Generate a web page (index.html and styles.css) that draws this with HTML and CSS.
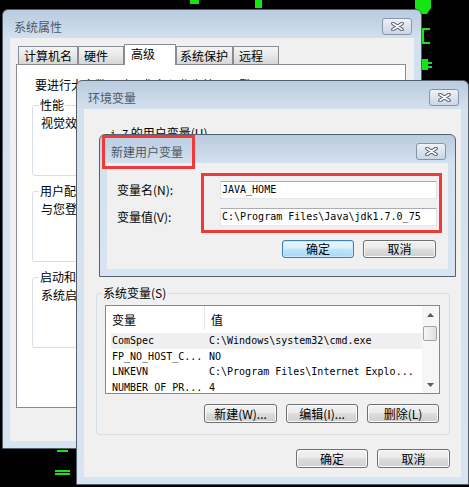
FILE: index.html
```html
<!DOCTYPE html>
<html lang="zh-CN">
<head>
  <meta charset="UTF-8">
  <title>新建用户变量</title>
  <link rel="stylesheet" href="styles.css">
</head>
<body>

  <div class="desktop">

    <svg class="specks" width="469" height="487" viewBox="0 0 469 487">
      <g fill="#14e614">
        <rect x="190" y="0" width="9" height="4"/>
        <rect x="255" y="0" width="7" height="8"/>
        <path d="M415 0h16v8l-4 6h-8l-4-6z"/>
        <rect x="422" y="28" width="2" height="16"/>
        <rect x="422" y="28" width="8" height="2"/>
        <rect x="422" y="42" width="8" height="2"/>
        <path d="M422 59h6v3h4v2h-4v2h4v2h-4v2h-6z"/>
        <rect x="57" y="450" width="11" height="2"/>
        <rect x="55" y="470" width="15" height="2"/>
        <rect x="55" y="473" width="15" height="2"/>
      </g>
    </svg>

    <!-- 系统属性 -->
    <section class="win win-sys">
      <header class="titlebar">
        <span class="title">系统属性</span>
        <button class="close" type="button">
          <svg width="13" height="9" viewBox="0 0 13 9"><path d="M2 1.5l9 6M11 1.5l-9 6" stroke="#4c5564" stroke-width="3.6" stroke-linecap="round"/><path d="M2 1.5l9 6M11 1.5l-9 6" stroke="#fff" stroke-width="1.7" stroke-linecap="round"/></svg>
        </button>
      </header>
      <div class="client sys-client">
        <nav class="tabs">
          <span class="tab tab-name">计算机名</span>
          <span class="tab tab-hw">硬件</span>
          <span class="tab tab-adv active">高级</span>
          <span class="tab tab-prot">系统保护</span>
          <span class="tab tab-remote">远程</span>
        </nav>
        <div class="tab-panel">
          <p class="admin-note">要进行大多数更改，您必须作为管理员登录。</p>
          <fieldset class="group">
            <legend>性能</legend>
            <p>视觉效果，处理器计划，内存使用，以及虚拟内存</p>
          </fieldset>
          <fieldset class="group">
            <legend>用户配置文件</legend>
            <p>与您登录有关的桌面设置</p>
          </fieldset>
          <fieldset class="group">
            <legend>启动和故障恢复</legend>
            <p>系统启动、系统失败和调试信息</p>
          </fieldset>
        </div>
      </div>
    </section>

    <!-- 环境变量 -->
    <section class="win win-env">
      <header class="titlebar">
        <span class="title">环境变量</span>
        <button class="close" type="button">
          <svg width="13" height="9" viewBox="0 0 13 9"><path d="M2 1.5l9 6M11 1.5l-9 6" stroke="#4c5564" stroke-width="3.6" stroke-linecap="round"/><path d="M2 1.5l9 6M11 1.5l-9 6" stroke="#fff" stroke-width="1.7" stroke-linecap="round"/></svg>
        </button>
      </header>
      <div class="client env-client">
        <p class="user-label"><span class="mono">i Z</span> 的用户变量(U)</p>
        <div class="user-area"></div>

        <fieldset class="sysvars">
          <legend>系统变量(S)</legend>
          <div class="listbox">
            <div class="list-main">
              <div class="list-head">
                <span class="col-a">变量</span>
                <span class="col-b">值</span>
              </div>
              <div class="list-rows mono">
                <div class="list-row cur"><span class="col-a">ComSpec</span><span class="col-b">C:\Windows\system32\cmd.exe</span></div>
                <div class="list-row"><span class="col-a">FP_NO_HOST_C...</span><span class="col-b">NO</span></div>
                <div class="list-row"><span class="col-a">LNKEVN</span><span class="col-b">C:\Program Files\Internet Explo...</span></div>
                <div class="list-row"><span class="col-a">NUMBER_OF_PR...</span><span class="col-b">4</span></div>
              </div>
            </div>
            <div class="scrollbar">
              <span class="sb-btn"><svg width="7" height="4" viewBox="0 0 7 4"><path d="M0 4L3.5 0L7 4z" fill="#5a5a5a"/></svg></span>
              <span class="sb-thumb"></span>
              <span class="sb-space"></span>
              <span class="sb-btn"><svg width="7" height="4" viewBox="0 0 7 4"><path d="M0 0L3.5 4L7 0z" fill="#5a5a5a"/></svg></span>
            </div>
          </div>
          <div class="btn-row">
            <button class="btn wide" type="button">新建(W)...</button>
            <button class="btn" type="button">编辑(I)...</button>
            <button class="btn" type="button">删除(L)</button>
          </div>
        </fieldset>

        <div class="btn-row dialog-btns">
          <button class="btn" type="button">确定</button>
          <button class="btn wide" type="button">取消</button>
        </div>
      </div>
    </section>

    <!-- 新建用户变量 -->
    <section class="win win-new">
      <header class="titlebar">
        <span class="title">新建用户变量</span>
        <button class="close" type="button">
          <svg width="13" height="9" viewBox="0 0 13 9"><path d="M2 1.5l9 6M11 1.5l-9 6" stroke="#4c5564" stroke-width="3.6" stroke-linecap="round"/><path d="M2 1.5l9 6M11 1.5l-9 6" stroke="#fff" stroke-width="1.7" stroke-linecap="round"/></svg>
        </button>
      </header>
      <div class="client new-client">
        <div class="field">
          <span class="field-label">变量名(N):</span>
          <span class="textbox mono">JAVA_HOME</span>
        </div>
        <div class="field">
          <span class="field-label">变量值(V):</span>
          <span class="textbox mono">C:\Program Files\Java\jdk1.7.0_75</span>
        </div>
        <div class="btn-row new-btns">
          <button class="btn default" type="button">确定</button>
          <button class="btn wide" type="button">取消</button>
        </div>
      </div>
    </section>

    <div class="callout callout-title"></div>
    <div class="callout callout-fields"></div>

  </div>

</body>
</html>
```

FILE: styles.css
```css
* {
  box-sizing: border-box;
}

html,
body {
  margin: 0;
  background: #000;
}

body {
  font-family: "Noto Sans CJK SC", "Noto Sans", sans-serif;
  font-size: 12px;
  line-height: 14px;
  color: #000;
}

p {
  margin: 0;
}

.mono {
  font-family: "DejaVu Sans Mono", "Liberation Mono", monospace;
  font-size: 10px;
}

.desktop {
  position: relative;
  width: 469px;
  height: 487px;
  overflow: hidden;
  background: #000;
}

.specks {
  position: absolute;
  left: 0;
  top: 0;
}

/* windows */
.win {
  position: absolute;
  display: flex;
  flex-direction: column;
  padding: 0 7px 7px;
  border: 1px solid #56606c;
  border-radius: 6px 6px 0 0;
  background: linear-gradient(#b9cbdf, #d3e0ee 28px, #d8e4f1);
}

.win-sys {
  left: 2px;
  top: 9px;
  width: 420px;
  height: 440px;
}

.win-env {
  left: 76px;
  top: 80px;
  width: 393px;
  height: 405px;
}

.win-new {
  left: 99px;
  top: 134px;
  width: 357px;
  height: 143px;
}

.titlebar {
  flex: none;
  display: flex;
  justify-content: space-between;
  align-items: flex-start;
  height: 28px;
}

.title {
  margin: 9px 0 0 4px;
  line-height: 16px;
  color: #4e5866;
}

.close {
  display: flex;
  align-items: center;
  justify-content: center;
  width: 30px;
  height: 17px;
  margin: 8px 2px 0 0;
  padding: 0;
  border: 1px solid #8595aa;
  border-radius: 3px;
  background: linear-gradient(#eef2f7, #dbe3ed 50%, #ccd7e4);
}

.client {
  flex: 1;
  background: #f0f0f0;
}

/* 系统属性 */
.sys-client {
  padding: 6px 8px 0 6px;
}

.tabs {
  display: flex;
  align-items: flex-end;
  height: 20px;
  padding-left: 2px;
}

.tab {
  height: 18px;
  padding: 2px 0 0 5px;
  border: 1px solid #898c95;
  border-bottom: none;
  background: linear-gradient(#f5f5f5, #e6e6e6 55%, #d6d6d6);
  white-space: nowrap;
}

.tab.active {
  position: relative;
  z-index: 1;
  height: 21px;
  margin-bottom: -1px;
  padding: 2px 0 0 6px;
  background: #fff;
}

.tab-name { width: 60px; }
.tab-hw { width: 46px; }
.tab-adv { width: 52px; }
.tab-prot { width: 57px; padding-left: 3px; }
.tab-remote { width: 46px; }

.tab-panel {
  height: 344px;
  padding: 13px 16px 0 15px;
  border: 1px solid #898c95;
  background: #fff;
}

.admin-note {
  padding-left: 3px;
  white-space: nowrap;
}

.group {
  min-width: 0;
  height: 78px;
  margin: 6px 0 0;
  padding: 0 8px;
  border: 1px solid #d5dfe5;
  border-radius: 3px;
}

.group + .group {
  margin-top: 8px;
}

.group legend {
  margin-left: -2px;
  padding: 0 1px;
  line-height: 14px;
}

.group p {
  padding-top: 4px;
  white-space: nowrap;
}

/* 环境变量 */
.env-client {
  display: flex;
  flex-direction: column;
  padding: 17px 11px 0 12px;
}

.user-label {
  padding-left: 14px;
  white-space: nowrap;
}

.user-area {
  height: 144px;
}

.sysvars {
  min-width: 0;
  margin: 0;
  padding: 5px 9px 11px 8px;
  border: 1px solid #d5dfe5;
  border-radius: 3px;
}

.sysvars legend {
  margin-left: -4px;
  padding: 0 2px;
  line-height: 14px;
}

.listbox {
  display: flex;
  height: 89px;
  overflow: hidden;
  border: 1px solid #828790;
  background: #fff;
}

.list-main {
  flex: 1;
  overflow: hidden;
}

.list-head {
  display: flex;
  height: 24px;
}

.list-head span {
  padding: 7px 0 0 6px;
}

.list-head .col-a {
  width: 99px;
  border-right: 1px solid #e5e5e5;
}

.list-rows {
  margin-top: 3px;
}

.list-row {
  display: flex;
  height: 15.5px;
  margin-left: 5px;
  line-height: 15.5px;
  white-space: nowrap;
}

.list-row.cur {
  background: #efefef;
}

.list-row .col-a {
  width: 94px;
  padding-left: 1px;
  overflow: hidden;
}

.list-row .col-b {
  padding-left: 4px;
}

.scrollbar {
  display: flex;
  flex-direction: column;
  width: 17px;
  background: #f6f6f6;
}

.sb-btn {
  display: flex;
  align-items: center;
  justify-content: center;
  height: 17px;
}

.sb-thumb {
  height: 15px;
  margin: 3px 2px 0 1px;
  border: 1px solid #a3a3a3;
  border-radius: 2px;
  background: linear-gradient(90deg, #f6f6f6, #e0e0e0);
}

.sb-space {
  flex: 1;
}

/* buttons */
.btn-row {
  display: flex;
  justify-content: flex-end;
  gap: 9px;
  margin-top: 10px;
  margin-right: 1px;
}

.btn {
  width: 72px;
  height: 19px;
  padding: 0;
  border: 1px solid #707070;
  border-radius: 3px;
  background: linear-gradient(#f2f2f2 0, #ebebeb 45%, #dddddd 50%, #cfcfcf 100%);
  box-shadow: inset 0 0 0 1px #fbfbfb;
  font: inherit;
  line-height: 17px;
  color: #000;
}

.btn.wide {
  width: 73px;
}

.btn.default {
  border-color: #3c7fb1;
  background: linear-gradient(#eaf6fd 0, #d9f0fc 45%, #bee6fd 50%, #a7d9f5 100%);
  box-shadow: inset 0 0 0 1px #c7e9fb;
}

.dialog-btns {
  margin-top: 14px;
  margin-right: 0;
}

/* 新建用户变量 */
.new-client {
  padding: 18px 11px 0 10px;
}

.field {
  display: flex;
  align-items: center;
  height: 18px;
}

.field + .field {
  margin-top: 9px;
}

.field-label {
  width: 103px;
  white-space: nowrap;
}

.textbox {
  flex: 1;
  min-width: 0;
  height: 18px;
  padding: 0 2px 0 1px;
  border: 1px solid;
  border-color: #abadb3 #dbdfe6 #e3e9ef #e2e3ea;
  background: #fff;
  line-height: 16px;
  white-space: nowrap;
  overflow: hidden;
}

.new-btns {
  margin-top: 14px;
}

.new-btns .btn {
  height: 18px;
  line-height: 16px;
}

/* red annotations */
.callout {
  position: absolute;
  border: 3px solid #f03a3a;
}

.callout-title {
  left: 102px;
  top: 135px;
  width: 93px;
  height: 34px;
}

.callout-fields {
  left: 201px;
  top: 173px;
  width: 241px;
  height: 60px;
}
```
